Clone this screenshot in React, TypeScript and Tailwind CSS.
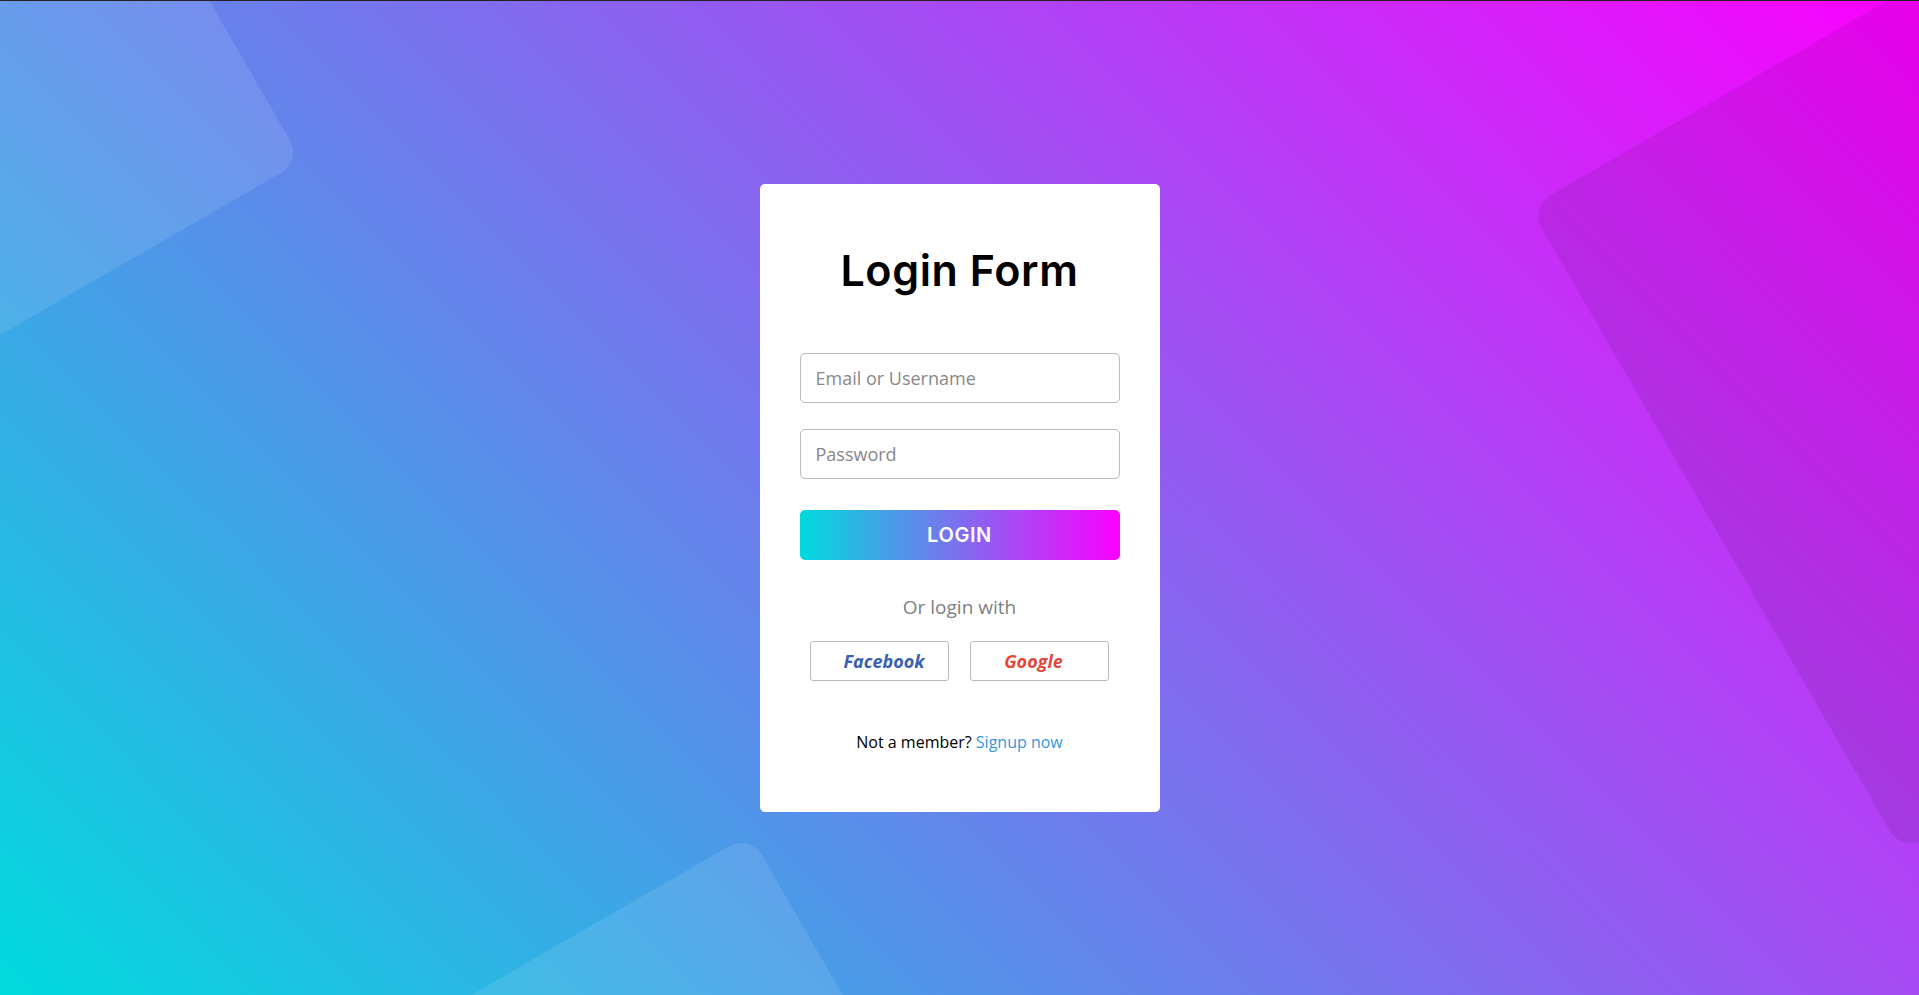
import React from "react";

export default function App() {
  return (
    <div className="relative w-full h-[995px] overflow-hidden border-t border-[#222] bg-[linear-gradient(45deg,#00dbde,#fc00ff)] flex items-center justify-center">
      {/* decorative background shapes */}
      <div className="absolute left-[-408px] top-[-250px] w-[600px] h-[600px] rounded-[24px] rotate-[60deg] bg-white/10" />
      <div className="absolute left-[340px] top-[943px] w-[600px] h-[600px] rounded-[24px] rotate-[60deg] bg-white/10" />
      <div className="absolute left-[1666px] top-[-30px] w-[745px] h-[745px] rounded-[24px] rotate-[60deg] bg-black/[0.08]" />

      <div className="relative w-[400px] h-[628px] bg-white rounded-[5px] px-[40px] pt-[61px] flex flex-col items-stretch font-['Open_Sans','Noto_Sans',sans-serif]">
        <h1 className="h-[50px] leading-[50px] text-center text-[43px] font-semibold text-black font-['Inter',sans-serif] tracking-[0.6px]">
          Login Form
        </h1>
        <input
          type="text"
          placeholder="Email or Username"
          className="mt-[58px] h-[50px] w-full border border-[#bbb] rounded-[5px] pl-[15px] text-[18px] text-[#333] placeholder:text-[#888] outline-none"
        />
        <input
          type="password"
          placeholder="Password"
          className="mt-[26px] h-[50px] w-full border border-[#bbb] rounded-[5px] pl-[15px] text-[18px] text-[#333] placeholder:text-[#888] outline-none"
        />
        <button className="mt-[31px] h-[50px] w-full rounded-[5px] bg-[linear-gradient(to_right,#00dbde,#fc00ff)] text-white text-[20px] font-semibold tracking-[0.6px] font-['Inter',sans-serif]">
          LOGIN
        </button>
        <div className="mt-[34px] text-center text-[19px] leading-[26px] text-[#808080]">
          Or login with
        </div>
        <div className="mt-[21px] flex justify-center gap-[21px]">
          <button className="w-[139px] h-[40px] border border-[#bbb] rounded-[3px] bg-white pl-[9px] text-[18px] font-bold italic text-[#3b5fb0]">
            Facebook
          </button>
          <button className="w-[139px] h-[40px] border border-[#bbb] rounded-[3px] bg-white pr-[12px] text-[18px] font-bold italic text-[#e0493b]">
            Google
          </button>
        </div>
        <div className="mt-[49px] text-center text-[16px] leading-[24px] text-black">
          Not a member? <a className="text-[#3498db]">Signup now</a>
        </div>
      </div>
    </div>
  );
}
